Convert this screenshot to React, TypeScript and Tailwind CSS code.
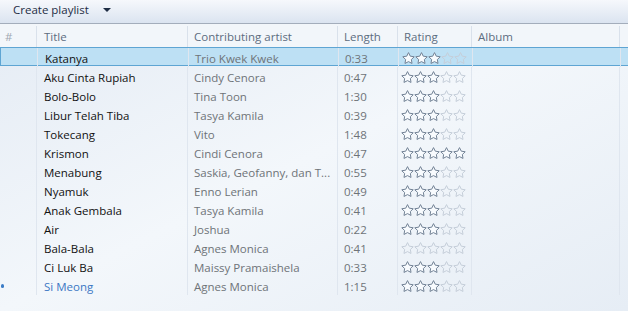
import React from 'react'

interface Song {
  title: string
  artist: string
  length: string
  rating: number
}

const songs: Song[] = [
  { title: 'Katanya', artist: 'Trio Kwek Kwek', length: '0:33', rating: 3 },
  { title: 'Aku Cinta Rupiah', artist: 'Cindy Cenora', length: '0:47', rating: 3 },
  { title: 'Bolo-Bolo', artist: 'Tina Toon', length: '1:30', rating: 3 },
  { title: 'Libur Telah Tiba', artist: 'Tasya Kamila', length: '0:39', rating: 3 },
  { title: 'Tokecang', artist: 'Vito', length: '1:48', rating: 3 },
  { title: 'Krismon', artist: 'Cindi Cenora', length: '0:47', rating: 5 },
  { title: 'Menabung', artist: 'Saskia, Geofanny, dan T...', length: '0:55', rating: 3 },
  { title: 'Nyamuk', artist: 'Enno Lerian', length: '0:49', rating: 3 },
  { title: 'Anak Gembala', artist: 'Tasya Kamila', length: '0:41', rating: 3 },
  { title: 'Air', artist: 'Joshua', length: '0:22', rating: 3 },
  { title: 'Bala-Bala', artist: 'Agnes Monica', length: '0:41', rating: 0 },
  { title: 'Ci Luk Ba', artist: 'Maissy Pramaishela', length: '0:33', rating: 3 },
  { title: 'Si Meong', artist: 'Agnes Monica', length: '1:15', rating: 3 },
]

const cols = 'grid grid-cols-[37px_151px_150px_60px_74px_148px_1fr]'

const Star = ({ on }: { on: boolean }) => (
  <svg width="13" height="12" viewBox="0 0 13 12">
    <path
      d="M6.5 0.6 L8.26 4.17 L12.21 4.75 L9.35 7.53 L10.03 11.45 L6.5 9.6 L2.97 11.45 L3.65 7.53 L0.79 4.75 L4.74 4.17 Z"
      fill={on ? '#f8fbfe' : 'none'}
      stroke={on ? '#728295' : '#c5ced9'}
      strokeWidth="1"
      strokeLinejoin="round"
    />
  </svg>
)

const Stars = ({ n }: { n: number }) => (
  <div className="flex items-center pl-[3px] pt-[1px]">
    {[0, 1, 2, 3, 4].map((i) => (
      <Star key={i} on={i < n} />
    ))}
  </div>
)

const App = () => {
  return (
    <div
      className="w-[628px] h-[311px] overflow-hidden text-[11.5px] bg-gradient-to-br from-[#e4ebf4] via-[#f3f7fb] to-[#e6edf5]"
      style={{ fontFamily: '"Open Sans", "Noto Sans", sans-serif' }}
    >
      <div className="h-[24px] flex items-start pt-[1px] bg-gradient-to-b from-[#f6f8fc] to-[#dbe4f0] border-b border-[#a3adbb]">
        <span className="pl-[13px] text-[#1e2d44]">Create playlist</span>
        <span className="ml-[14px] mt-[7px] w-0 h-0 border-l-[4px] border-r-[4px] border-t-[4px] border-l-transparent border-r-transparent border-t-[#1e2d44]" />
      </div>
      <div className={`${cols} h-[23px] pt-[2px] bg-[#f2f6fa] text-[#5d6d80]`}>
        <div className="flex items-center pl-[5px] border-r border-[#d9e1eb] text-[#a0a8b2]">#</div>
        <div className="flex items-center pl-[7px] border-r border-[#d9e1eb]">Title</div>
        <div className="flex items-center pl-[6px] border-r border-[#d9e1eb]">Contributing artist</div>
        <div className="flex items-center pl-[6px] border-r border-[#d9e1eb]">Length</div>
        <div className="flex items-center pl-[6px] border-r border-[#d9e1eb]">Rating</div>
        <div className="flex items-center pl-[6px] border-r border-[#d9e1eb]">Album</div>
        <div />
      </div>
      <div>
        {songs.map((s, i) => {
          const selected = i === 0
          const playing = i === songs.length - 1
          return (
            <div
              key={i}
              className={`${cols} h-[19px] ${selected ? 'bg-[#bde0f4] border-y border-l border-[#5ea5d3]' : 'border-y border-transparent'}`}
            >
              <div className="flex items-center border-r border-[#dfe6ef]">
                {playing && <span className="ml-[1px] w-[3px] h-[4px] rounded-full bg-[#3b7cc6]" />}
              </div>
              <div className={`flex items-center pl-[7px] pt-[2px] border-r border-[#dfe6ef] ${playing ? 'text-[#3b78c4]' : 'text-[#111]'}`}>
                {s.title}
              </div>
              <div className="flex items-center pl-[6px] pt-[2px] border-r border-[#dfe6ef] text-[#6e7378] whitespace-nowrap overflow-hidden">
                {s.artist}
              </div>
              <div className="flex items-center pl-[6px] pt-[2px] border-r border-[#dfe6ef] text-[#6e7378]">{s.length}</div>
              <div className="flex items-center border-r border-[#dfe6ef]">
                <Stars n={s.rating} />
              </div>
              <div className="border-r border-[#dfe6ef]" />
              <div />
            </div>
          )
        })}
      </div>
    </div>
  )
}

export default App
